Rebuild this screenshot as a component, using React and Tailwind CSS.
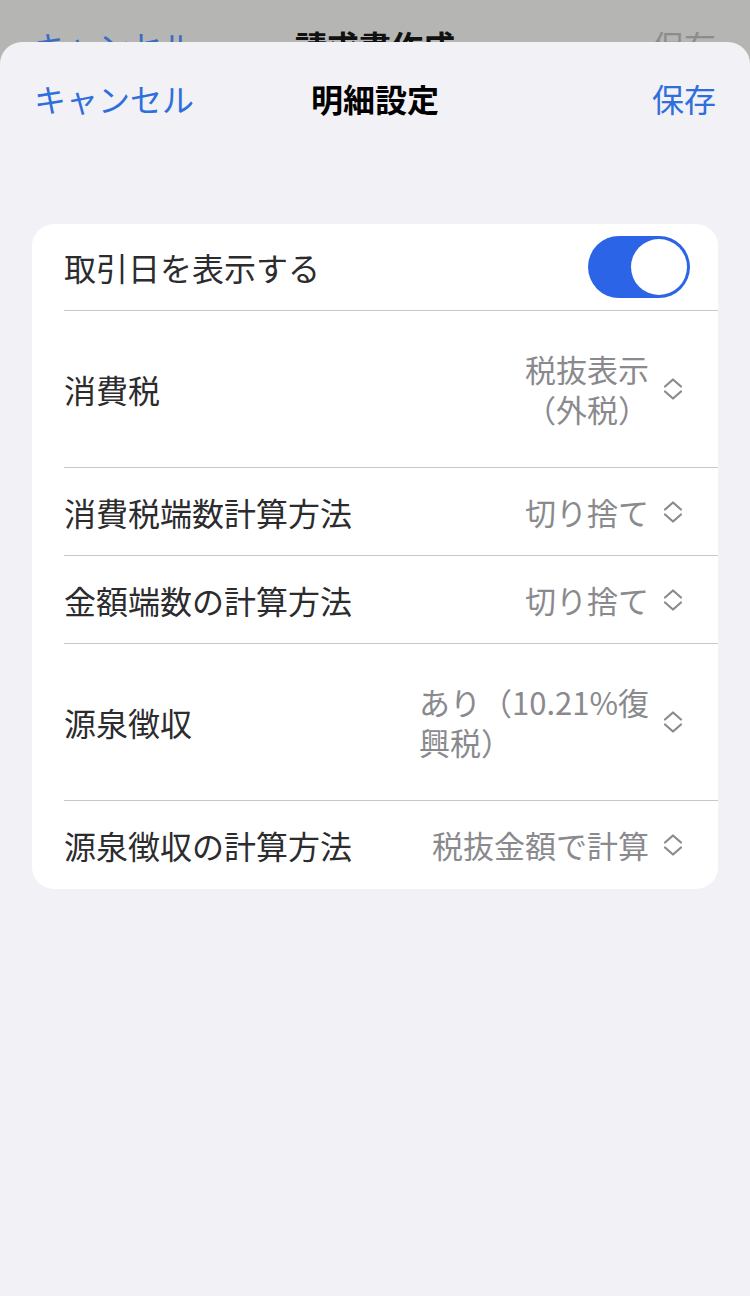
import React from 'react';

const font = { fontFamily: '"Noto Sans CJK JP", "Noto Sans", sans-serif' };

const rows = [
  { label: '消費税', value: ['税抜表示', '（外税）'], align: 'text-right' },
  { label: '消費税端数計算方法', value: ['切り捨て'] },
  { label: '金額端数の計算方法', value: ['切り捨て'] },
  { label: '源泉徴収', value: ['あり（10.21%復', '興税）'], align: 'text-left' },
  { label: '源泉徴収の計算方法', value: ['税抜金額で計算'] },
];

const Chevrons = () => (
  <svg width="22" height="26" viewBox="0 0 22 26" fill="none" stroke="#8a8a8e" strokeWidth="2.2" strokeLinecap="round" strokeLinejoin="round">
    <path d="M3 10.5 L11 3.5 L19 10.5" />
    <path d="M3 15.5 L11 22.5 L19 15.5" />
  </svg>
);

const Toggle = () => (
  <div className="w-[102px] h-[62px] rounded-full bg-[#2b64e7] p-[3px] flex justify-end items-center">
    <div className="w-[56px] h-[56px] rounded-full bg-white" />
  </div>
);

const App = () => {
  return (
    <div className="min-h-screen bg-[#b5b6b3] flex flex-col" style={font}>
      {/* page behind the sheet */}
      <div className="h-[42px] overflow-hidden">
        <div className="grid grid-cols-[1fr_auto_1fr] items-center px-[34px] pt-[24px] h-[66px] text-[32px] leading-[40px]">
          <span className="text-[#3a6cc4]">キャンセル</span>
          <span className="font-bold text-[#111]">請求書作成</span>
          <span className="text-[#8c8d8b] text-right">保存</span>
        </div>
      </div>

      <div className="flex-1 bg-[#f2f1f6] rounded-t-[22px] pb-[400px]">
        <div className="grid grid-cols-[1fr_auto_1fr] items-center h-[110px] px-[34px] pt-[2px] text-[32px] leading-[40px]">
          <span className="text-[#2f6fdc]">キャンセル</span>
          <span className="font-bold text-black">明細設定</span>
          <span className="text-[#2f6fdc] text-right">保存</span>
        </div>

        <div className="mt-[72px] mx-[32px] bg-white rounded-[22px] pl-[32px]">
          <div className="flex items-center justify-between h-[87px] pr-[28px] border-b border-[#c8c7cc]">
            <span className="text-[32px] leading-[40px] text-[#2c2c2e]">取引日を表示する</span>
            <Toggle />
          </div>
          {rows.map((r, i) => (
            <div
              key={r.label}
              className={`flex items-center justify-between pr-[34px] ${r.value.length > 1 ? 'h-[157px]' : 'h-[88px]'} ${i < rows.length - 1 ? 'border-b border-[#c8c7cc]' : ''}`}
            >
              <span className="text-[32px] leading-[40px] text-[#2c2c2e] whitespace-nowrap">{r.label}</span>
              <div className="flex items-center gap-[13px]">
                <div className={`text-[31px] leading-[40px] text-[#8a8a8e] whitespace-nowrap ${r.align || ''}`}>
                  {r.value.map((line) => (
                    <div key={line}>{line}</div>
                  ))}
                </div>
                <Chevrons />
              </div>
            </div>
          ))}
        </div>
      </div>
    </div>
  );
};

export default App;
